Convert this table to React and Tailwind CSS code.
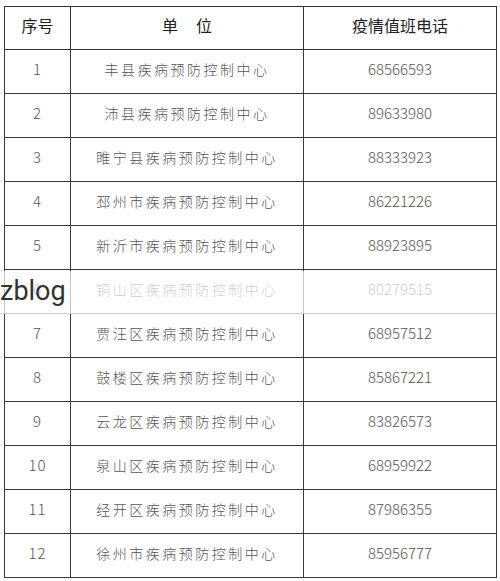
import React from "react";

const rows = [
  ["1", "丰县疾病预防控制中心", "68566593"],
  ["2", "沛县疾病预防控制中心", "89633980"],
  ["3", "睢宁县疾病预防控制中心", "88333923"],
  ["4", "邳州市疾病预防控制中心", "86221226"],
  ["5", "新沂市疾病预防控制中心", "88923895"],
  ["6", "铜山区疾病预防控制中心", "80279515"],
  ["7", "贾汪区疾病预防控制中心", "68957512"],
  ["8", "鼓楼区疾病预防控制中心", "85867221"],
  ["9", "云龙区疾病预防控制中心", "83826573"],
  ["10", "泉山区疾病预防控制中心", "68959922"],
  ["11", "经开区疾病预防控制中心", "87986355"],
  ["12", "徐州市疾病预防控制中心", "85956777"],
];

export default function App() {
  return (
    <div className="relative w-[500px] h-[581px] bg-white overflow-hidden font-['Noto_Sans_CJK_SC',sans-serif]">
      <div className="pt-[6px] pl-[4px]">
        <table className="border-collapse w-[492px] table-fixed">
          <colgroup>
            <col className="w-[66px]" />
            <col className="w-[233px]" />
            <col className="w-[193px]" />
          </colgroup>
          <thead>
            <tr className="h-[43px] text-[16px] text-[#222]">
              <th className="border border-[#333] font-normal pb-[6px]">序号</th>
              <th className="border border-[#333] font-normal pb-[6px]">
                单<span className="inline-block w-[18px]"></span>位
              </th>
              <th className="border border-[#333] font-normal pb-[6px]">疫情值班电话</th>
            </tr>
          </thead>
          <tbody>
            {rows.map((r) => (
              <tr key={r[0]} className="h-[44px] text-[#555]">
                <td className="border border-[#3a3a3a] text-center text-[15px] font-light tracking-[1px] pb-[4px]">
                  {r[0]}
                </td>
                <td className="border border-[#3a3a3a] text-center text-[14px] font-light tracking-[2.5px] pb-[4px]">
                  {r[1]}
                </td>
                <td className="border border-[#3a3a3a] text-center text-[15px] font-light pb-[4px]">
                  {r[2]}
                </td>
              </tr>
            ))}
          </tbody>
        </table>
      </div>

      {/* watermark overlay */}
      <div className="absolute left-0 top-[271px] w-[496px] h-[43px] bg-white/70 border-b border-[#ccc] flex items-center">
        <span className="text-[27px] leading-none text-[#333] font-['Roboto',sans-serif] pb-[2px]">
          zblog
        </span>
      </div>
    </div>
  );
}
